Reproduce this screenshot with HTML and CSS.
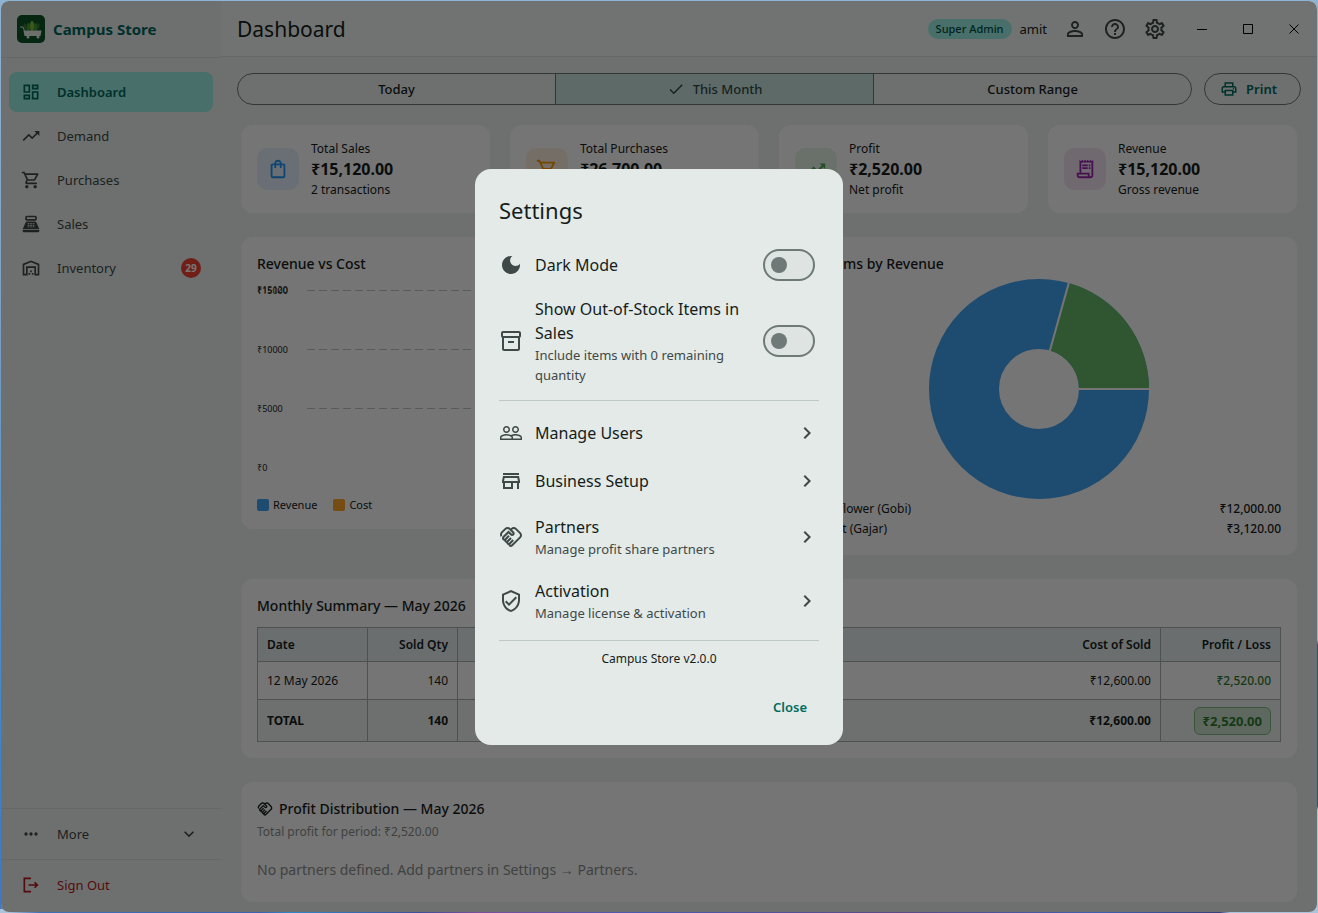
FILE: index.html
```html
<!DOCTYPE html>
<html lang="en">
<head>
<meta charset="utf-8">
<title>Campus Store</title>
<meta name="viewport" content="width=device-width, initial-scale=1">
<link rel="stylesheet" href="styles.css">
</head>
<body>
<svg class="sprite" aria-hidden="true">
  <symbol id="i-dashboard" viewBox="0 0 24 24"><path d="M19 5v2h-4V5h4M9 5v6H5V5h4m10 8v6h-4v-6h4M9 17v2H5v-2h4M21 3h-8v6h8V3zM11 3H3v10h8V3zm10 8h-8v10h8V11zm-10 4H3v6h8v-6z"/></symbol>
  <symbol id="i-trend" viewBox="0 0 24 24"><path d="M16 6l2.29 2.29-4.88 4.88-4-4L2 16.59 3.41 18l6-6 4 4 6.3-6.29L22 12V6z"/></symbol>
  <symbol id="i-cart" viewBox="0 0 24 24"><path d="M15.55 13c.75 0 1.41-.41 1.75-1.03l3.58-6.49c.37-.66-.11-1.48-.87-1.48H5.21l-.94-2H1v2h2l3.6 7.59-1.35 2.44C4.52 15.37 5.48 17 7 17h12v-2H7l1.1-2h7.45zM6.16 6h12.15l-2.76 5H8.53L6.16 6zM7 18c-1.1 0-1.99.9-1.99 2S5.9 22 7 22s2-.9 2-2-.9-2-2-2zm10 0c-1.1 0-1.99.9-1.99 2s.89 2 1.99 2 2-.9 2-2-.9-2-2-2z"/></symbol>
  <symbol id="i-pos" viewBox="0 0 24 24"><path fill-rule="evenodd" d="M17 2H7c-1.1 0-2 .9-2 2v2c0 1.100.9 2 2 2h10c1.100 0 2-.9 2-2V4c0-1.100-.9-2-2-2zM17 6H7V4h10v2zM20 22H4c-1.100 0-2-.9-2-2v-1h20v1c0 1.100-.9 2-2 2zM18.530 10.190C18.210 9.470 17.490 9 16.700 9H7.300c-.79 0-1.510.47-1.830 1.190L2 18h20zM8 11h2v1H8zM11 11h2v1h-2zM14 11h2v1h-2zM8 13h2v1H8zM11 13h2v1h-2zM14 13h2v1h-2zM8 15h2v1H8zM11 15h2v1h-2zM14 15h2v1h-2z"/></symbol>
  <symbol id="i-warehouse" viewBox="0 0 24 24"><path fill-rule="evenodd" d="M22 21V7L12 3 2 7v14h6v-9h8v9zM4 8.350V19h2v-9h12v9h2V8.350L12 5.150zM9 18h2v2H9zM11 15h2v2h-2zM13 18h2v2h-2z"/></symbol>
  <symbol id="i-more" viewBox="0 0 24 24"><circle cx="6" cy="12" r="2"/><circle cx="12" cy="12" r="2"/><circle cx="18" cy="12" r="2"/></symbol>
  <symbol id="i-down" viewBox="0 0 24 24"><path d="M16.590 8.590L12 13.170 7.410 8.590 6 10l6 6 6-6z"/></symbol>
  <symbol id="i-right" viewBox="0 0 24 24"><path d="M10 6L8.590 7.410 13.170 12l-4.580 4.590L10 18l6-6z"/></symbol>
  <symbol id="i-logout" viewBox="0 0 24 24"><path d="M17 8l-1.410 1.410L17.170 11H9v2h8.170l-1.580 1.580L17 16l4-4-4-4zM5 5h7V3H3v18h9v-2H5V5z"/></symbol>
  <symbol id="i-person" viewBox="0 0 24 24"><path d="M12 5.900c1.160 0 2.100.94 2.100 2.100s-.94 2.100-2.100 2.100S9.900 9.160 9.900 8s.94-2.100 2.100-2.100m0 9c2.970 0 6.100 1.460 6.100 2.100v1.100H5.900V17c0-.64 3.130-2.100 6.100-2.100M12 4C9.790 4 8 5.790 8 8s1.790 4 4 4 4-1.790 4-4-1.790-4-4-4zm0 9c-2.670 0-8 1.340-8 4v3h16v-3c0-2.660-5.330-4-8-4z"/></symbol>
  <symbol id="i-help" viewBox="0 0 24 24"><path d="M11 18h2v-2h-2v2zm1-16C6.480 2 2 6.480 2 12s4.480 10 10 10 10-4.480 10-10S17.520 2 12 2zm0 18c-4.410 0-8-3.590-8-8s3.590-8 8-8 8 3.590 8 8-3.590 8-8 8zm0-14c-2.210 0-4 1.790-4 4h2c0-1.100.9-2 2-2s2 .9 2 2c0 2-3 1.750-3 5h2c0-2.250 3-2.500 3-5 0-2.210-1.790-4-4-4z"/></symbol>
  <symbol id="i-gear" viewBox="0 0 24 24"><path d="M19.43 12.98c.04-.32.07-.64.07-.98 0-.34-.03-.66-.07-.98l2.110-1.650c.19-.15.24-.42.12-.64l-2-3.460c-.09-.16-.26-.25-.44-.25-.06 0-.12.01-.17.03l-2.490 1c-.52-.4-1.080-.73-1.690-.98l-.38-2.650C14.460 2.180 14.250 2 14 2h-4c-.25 0-.46.18-.49.42l-.38 2.650c-.61.25-1.170.59-1.690.98l-2.490-1c-.06-.02-.12-.03-.18-.03-.17 0-.34.09-.43.25l-2 3.460c-.13.22-.07.49.12.64l2.110 1.650c-.04.32-.07.65-.07.98 0 .33.03.66.07.98l-2.110 1.650c-.19.15-.24.42-.12.64l2 3.460c.09.16.26.25.44.25.06 0 .12-.01.17-.03l2.490-1c.52.4 1.080.73 1.690.98l.38 2.650c.03.24.24.42.49.42h4c.25 0 .46-.18.49-.42l.38-2.650c.61-.25 1.170-.59 1.690-.98l2.490 1c.06.02.12.03.18.03.17 0 .34-.09.43-.25l2-3.460c.12-.22.07-.49-.12-.64l-2.110-1.650zm-1.980-1.710c.04.31.05.52.05.73 0 .21-.02.43-.05.73l-.14 1.130.89.7 1.080.84-.7 1.210-1.270-.51-1.040-.42-.9.68c-.43.32-.84.56-1.250.73l-1.060.43-.16 1.130-.2 1.350h-1.400l-.19-1.350-.16-1.130-1.060-.43c-.43-.18-.83-.41-1.230-.71l-.91-.7-1.060.43-1.270.51-.7-1.210 1.080-.84.89-.7-.14-1.130c-.03-.31-.05-.54-.05-.74s.02-.43.05-.73l.14-1.130-.89-.7-1.080-.84.7-1.210 1.270.51 1.040.42.9-.68c.43-.32.84-.56 1.250-.73l1.060-.43.16-1.130.2-1.350h1.390l.19 1.350.16 1.130 1.060.43c.43.18.83.41 1.230.71l.91.7 1.060-.43 1.270-.51.7 1.210-1.070.85-.89.7.14 1.130zM12 8c-2.210 0-4 1.790-4 4s1.790 4 4 4 4-1.790 4-4-1.790-4-4-4zm0 6c-1.100 0-2-.9-2-2s.9-2 2-2 2 .9 2 2-.9 2-2 2z"/></symbol>
  <symbol id="i-print" viewBox="0 0 24 24"><path d="M19 8h-1V3H6v5H5c-1.660 0-3 1.340-3 3v6h4v4h12v-4h4v-6c0-1.660-1.340-3-3-3zM8 5h8v3H8V5zm8 12v2H8v-4h8v2zm2-2v-2H6v2H4v-4c0-.55.45-1 1-1h14c.55 0 1 .45 1 1v4h-2z"/><circle cx="18" cy="11.5" r="1"/></symbol>
  <symbol id="i-bag" viewBox="0 0 24 24"><path d="M18 6h-2c0-2.210-1.790-4-4-4S8 3.790 8 6H6c-1.100 0-2 .9-2 2v12c0 1.100.9 2 2 2h12c1.100 0 2-.9 2-2V8c0-1.100-.9-2-2-2zm-6-2c1.100 0 2 .9 2 2h-4c0-1.100.9-2 2-2zm6 16H6V8h2v2c0 .55.45 1 1 1s1-.45 1-1V8h4v2c0 .55.45 1 1 1s1-.45 1-1V8h2v12z"/></symbol>
  <symbol id="i-receipt" viewBox="0 0 24 24"><path d="M19.500 3.500L18 2l-1.500 1.500L15 2l-1.500 1.500L12 2l-1.500 1.500L9 2 7.500 3.500 6 2v14H3v3c0 1.660 1.340 3 3 3h12c1.660 0 3-1.340 3-3V2l-1.500 1.500zM15 20H6c-.55 0-1-.45-1-1v-1h10v2zm4-1c0 .55-.45 1-1 1s-1-.45-1-1v-3H8V5h11v14z"/><path d="M9 7h6v2H9zM16 7h2v2h-2zM9 10h6v2H9zM16 10h2v2h-2z"/></symbol>
  <symbol id="i-moon" viewBox="0 0 24 24"><path d="M12 3c-4.970 0-9 4.030-9 9s4.030 9 9 9 9-4.030 9-9c0-.46-.04-.92-.1-1.360-.98 1.370-2.580 2.260-4.400 2.260-2.980 0-5.400-2.420-5.400-5.400 0-1.810.89-3.420 2.260-4.400-.44-.06-.9-.1-1.360-.1z"/></symbol>
  <symbol id="i-box" viewBox="0 0 24 24"><path d="M20 2H4c-1 0-2 .9-2 2v3.010c0 .72.43 1.340 1 1.690V20c0 1.100 1.100 2 2 2h14c.9 0 2-.9 2-2V8.700c.57-.35 1-.97 1-1.690V4c0-1.100-1-2-2-2zm-1 18H5V9h14v11zm1-13H4V4h16v3z"/><path d="M9 12h6v2H9z"/></symbol>
  <symbol id="i-people" viewBox="0 0 24 24"><path d="M16.500 13c-1.200 0-3.070.34-4.500 1-1.430-.67-3.300-1-4.500-1C5.330 13 1 14.080 1 16.250V19h22v-2.750c0-2.170-4.330-3.250-6.500-3.250zm-4 4.500h-10v-1.250c0-.54 2.560-1.750 5-1.750s5 1.210 5 1.750v1.250zm9 0H14v-1.250c0-.46-.2-.86-.52-1.220.88-.3 1.960-.53 3.020-.53 2.440 0 5 1.210 5 1.750v1.250zM7.500 12c1.930 0 3.500-1.570 3.500-3.500S9.430 5 7.500 5 4 6.570 4 8.500 5.570 12 7.500 12zm0-5.500c1.100 0 2 .9 2 2s-.9 2-2 2-2-.9-2-2 .9-2 2-2zm9 5.500c1.930 0 3.500-1.570 3.500-3.500S18.430 5 16.500 5 13 6.570 13 8.500s1.570 3.500 3.500 3.500zm0-5.500c1.100 0 2 .9 2 2s-.9 2-2 2-2-.9-2-2 .9-2 2-2z"/></symbol>
  <symbol id="i-store" viewBox="0 0 24 24"><path d="M18.360 9l.6 3H5.040l.6-3h12.720M20 4H4v2h16V4zm0 3H4l-1 5v2h1v6h10v-6h4v6h2v-6h1v-2l-1-5zM6 18v-4h6v4H6z"/></symbol>
  <symbol id="i-handshake" viewBox="0 0 24 24"><path fill-rule="evenodd" d="M21.830 13.070c1.560-1.560 1.560-4.090 0-5.660l-4.240-4.240c-1.560-1.560-4.090-1.560-5.660 0l-.28.28-.28-.28c-1.560-1.560-4.090-1.560-5.660 0L2.170 6.710C.75 8.130.62 10.340 1.770 11.900l1.450-1.450c-.39-.75-.26-1.700.37-2.330l3.540-3.540c.78-.78 2.050-.78 2.830 0l3.560 3.560c.18.18.21.5 0 .71-.21.21-.53.18-.71 0L9.520 5.570l-5.800 5.790c-.98.97-.98 2.560 0 3.540.39.39.89.63 1.420.7.07.52.3 1.020.7 1.420.4.4.9.63 1.420.7.07.52.3 1.020.7 1.420.4.4.9.63 1.420.7.07.54.31 1.030.7 1.420.47.47 1.100.73 1.770.73.67 0 1.300-.26 1.770-.73l8.210-8.190zM12.220 19.850c-.18.18-.5.21-.71 0-.18-.18-.21-.5 0-.71l3.390-3.390-1.410-1.410-3.390 3.390c-.19.2-.51.19-.71 0-.21-.21-.18-.53 0-.71l3.390-3.390-1.410-1.410-3.390 3.390c-.18.18-.5.21-.71 0-.19-.19-.19-.51 0-.71l3.390-3.390-1.420-1.410-3.390 3.390c-.18.18-.5.21-.71 0-.19-.2-.19-.51 0-.71L9.520 8.400l1.870 1.860c.95.95 2.590.94 3.540 0 .98-.98.98-2.560 0-3.540l-1.860-1.860.28-.28c.78-.78 2.050-.78 2.830 0l4.240 4.240c.78.78.78 2.050 0 2.830l-8.200 8.200z"/></symbol>
  <symbol id="i-shield" viewBox="0 0 24 24"><path d="M12 1L3 5v6c0 5.550 3.840 10.740 9 12 5.160-1.260 9-6.450 9-12V5l-9-4zm7 10c0 4.520-2.980 8.690-7 9.930-4.020-1.240-7-5.410-7-9.930V6.300l7-3.110 7 3.110V11zm-11.590.59L6 13l4 4 8-8-1.410-1.420L10 14.170z"/></symbol>
  <symbol id="i-check" viewBox="0 0 24 24"><path d="M9 16.170L4.830 12l-1.420 1.410L9 19 21 7l-1.410-1.410z"/></symbol>
</svg>

<div class="window">
  <aside class="sidebar">
    <div class="brand">
      <svg class="logo" viewBox="0 0 28 28" aria-hidden="true">
        <rect width="28" height="28" rx="5" fill="#0c5424"/>
        <path d="M9 15C6 13 6 10 7 8c2 1 4 4 4 7zM20 15c3-2 3-5 2-7-2 1-4 4-4 7z" fill="#2f7d34"/>
        <ellipse cx="15" cy="11" rx="2" ry="5" fill="#7cc63a"/>
        <ellipse cx="11.500" cy="12" rx="1.500" ry="4" fill="#4c9a38"/><ellipse cx="18.500" cy="12" rx="1.500" ry="4" fill="#4c9a38"/>
        <path d="M3 12h3l1.500 4" fill="none" stroke="#e9efe6" stroke-width="1"/>
        <path d="M6.500 15.500h18l-1 5.500h-16z" fill="#eef2ea"/>
        <circle cx="11" cy="22" r="1.500" fill="#eef2ea"/><circle cx="21" cy="22" r="1.500" fill="#eef2ea"/>
      </svg>
      <span>Campus Store</span>
    </div>
    <nav class="nav">
      <a class="nav-item active" href="#"><svg class="ic20"><use href="#i-dashboard"/></svg><span>Dashboard</span></a>
      <a class="nav-item" href="#"><svg class="ic20"><use href="#i-trend"/></svg><span>Demand</span></a>
      <a class="nav-item" href="#"><svg class="ic20"><use href="#i-cart"/></svg><span>Purchases</span></a>
      <a class="nav-item" href="#"><svg class="ic20"><use href="#i-pos"/></svg><span>Sales</span></a>
      <a class="nav-item" href="#"><svg class="ic20"><use href="#i-warehouse"/></svg><span>Inventory</span><span class="count">29</span></a>
    </nav>
    <button class="side-btn" type="button"><svg class="ic20"><use href="#i-more"/></svg><span>More</span><svg class="ic20 end"><use href="#i-down"/></svg></button>
    <button class="side-btn danger" type="button"><svg class="ic20"><use href="#i-logout"/></svg><span>Sign Out</span></button>
  </aside>

  <div class="page">
    <header class="topbar">
      <h1>Dashboard</h1>
      <span class="role">Super Admin</span>
      <span class="user">amit</span>
      <div class="tools">
        <button type="button" aria-label="Account"><svg class="ic24"><use href="#i-person"/></svg></button>
        <button type="button" aria-label="Help"><svg class="ic24"><use href="#i-help"/></svg></button>
        <button type="button" aria-label="Settings"><svg class="ic24"><use href="#i-gear"/></svg></button>
      </div>
      <div class="winctl">
        <button type="button" aria-label="Minimize"><svg viewBox="0 0 10 10"><path d="M0 5.500h10"/></svg></button>
        <button type="button" aria-label="Maximize"><svg viewBox="0 0 10 10"><path d="M.5.5h9v9h-9z"/></svg></button>
        <button type="button" aria-label="Close window"><svg viewBox="0 0 10 10"><path d="M.5.5l9 9M9.500.5l-9 9"/></svg></button>
      </div>
    </header>

    <main class="content">
      <div class="filters">
        <div class="segments" role="group" aria-label="Period">
          <button type="button">Today</button>
          <button type="button" class="on"><svg class="ic18"><use href="#i-check"/></svg>This Month</button>
          <button type="button">Custom Range</button>
        </div>
        <button class="print" type="button"><svg class="ic18"><use href="#i-print"/></svg>Print</button>
      </div>

      <section class="stats">
        <article class="card stat"><span class="tile blue"><svg class="ic22"><use href="#i-bag"/></svg></span><div><p>Total Sales</p><strong>₹15,120.00</strong><p>2 transactions</p></div></article>
        <article class="card stat"><span class="tile orange"><svg class="ic22"><use href="#i-cart"/></svg></span><div><p>Total Purchases</p><strong>₹26,700.00</strong><p>3 purchases</p></div></article>
        <article class="card stat"><span class="tile green"><svg class="ic22"><use href="#i-trend"/></svg></span><div><p>Profit</p><strong>₹2,520.00</strong><p>Net profit</p></div></article>
        <article class="card stat"><span class="tile purple"><svg class="ic22"><use href="#i-receipt"/></svg></span><div><p>Revenue</p><strong>₹15,120.00</strong><p>Gross revenue</p></div></article>
      </section>

      <section class="charts">
        <article class="card">
          <h2>Revenue vs Cost</h2>
          <svg class="bars" role="img" aria-label="Revenue and cost by day">
            <g class="grid"><line x1="50" x2="100%" y1="15.500" y2="15.500"/><line x1="50" x2="100%" y1="74.500" y2="74.500"/><line x1="50" x2="100%" y1="133.500" y2="133.500"/></g>
            <rect x="57%" y="14" width="14" height="178" fill="#42a5f5"/><rect x="61%" y="43" width="14" height="149" fill="#ffa726"/>
            <text x="0" y="18">₹15120</text><text x="0" y="19">₹15000</text><text x="0" y="78">₹10000</text><text x="0" y="137">₹5000</text><text x="0" y="196">₹0</text>
          </svg>
          <div class="legend"><span><i class="sw rev"></i>Revenue</span><span><i class="sw cost"></i>Cost</span></div>
        </article>
        <article class="card">
          <h2>Top Items by Revenue</h2>
          <svg class="donut" viewBox="0 0 220 220" role="img" aria-label="Share of revenue by item">
            <circle cx="110" cy="110" r="75" fill="none" stroke="#42a5f5" stroke-width="70"/>
            <path d="M220 110A110 110 0 0 0 139.800 4.100L120.800 71.500A40 40 0 0 1 150 110z" fill="#66bb6a"/>
            <path d="M149 110h71M139.800 4.100L120.600 72.500" stroke="#fff" stroke-width="2"/>
          </svg>
          <ul class="items">
            <li><i class="dot rev"></i>Cauliflower (Gobi)<b>₹12,000.00</b></li>
            <li><i class="dot grn"></i>Carrot (Gajar)<b>₹3,120.00</b></li>
          </ul>
        </article>
      </section>

      <section class="card">
        <h2>Monthly Summary — May 2026</h2>
        <table class="summary">
          <colgroup><col class="c-date"><col class="c-qty"><col class="c-rev"><col><col class="c-pl"></colgroup>
          <thead><tr><th>Date</th><th>Sold Qty</th><th>Revenue</th><th>Cost of Sold</th><th>Profit / Loss</th></tr></thead>
          <tbody><tr><td>12 May 2026</td><td>140</td><td>₹15,120.00</td><td>₹12,600.00</td><td class="gain">₹2,520.00</td></tr></tbody>
          <tfoot><tr><td>TOTAL</td><td>140</td><td>₹15,120.00</td><td>₹12,600.00</td><td><span class="chip">₹2,520.00</span></td></tr></tfoot>
        </table>
      </section>

      <section class="card partners">
        <h2><svg class="ic16"><use href="#i-handshake"/></svg>Profit Distribution — May 2026</h2>
        <p class="sub">Total profit for period: ₹2,520.00</p>
        <p class="empty">No partners defined. Add partners in Settings → Partners.</p>
      </section>
    </main>
  </div>

  <div class="scrim">
    <div class="dialog" role="dialog" aria-modal="true" aria-labelledby="dlg-title">
      <h2 id="dlg-title">Settings</h2>
      <label class="row switch-row" for="dark"><svg class="ic24"><use href="#i-moon"/></svg><span class="txt">Dark Mode</span><input id="dark" class="switch" type="checkbox" role="switch"></label>
      <label class="row switch-row tall" for="oos"><svg class="ic24"><use href="#i-box"/></svg><span class="txt">Show Out-of-Stock Items in Sales<small>Include items with 0 remaining quantity</small></span><input id="oos" class="switch" type="checkbox" role="switch"></label>
      <hr>
      <button class="row" type="button"><svg class="ic24"><use href="#i-people"/></svg><span class="txt">Manage Users</span><svg class="ic24"><use href="#i-right"/></svg></button>
      <button class="row" type="button"><svg class="ic24"><use href="#i-store"/></svg><span class="txt">Business Setup</span><svg class="ic24"><use href="#i-right"/></svg></button>
      <button class="row two" type="button"><svg class="ic24"><use href="#i-handshake"/></svg><span class="txt">Partners<small>Manage profit share partners</small></span><svg class="ic24"><use href="#i-right"/></svg></button>
      <button class="row two" type="button"><svg class="ic24"><use href="#i-shield"/></svg><span class="txt">Activation<small>Manage license &amp; activation</small></span><svg class="ic24"><use href="#i-right"/></svg></button>
      <hr>
      <p class="version">Campus Store v2.0.0</p>
      <button class="close" type="button">Close</button>
    </div>
  </div>
</div>
</body>
</html>
```
FILE: styles.css
```css
:root {
  --ink: #161d1c;
  --ink-soft: #3f4947;
  --outline: #6f7977;
  --line: #dae2df;
  --primary: #006a60;
  --primary-soft: #9ef2e4;
  --surface: #f4fbf8;
  --surface-low: #eff5f2;
}
* { box-sizing: border-box; }
body {
  margin: 0;
  padding: 1px;
  height: 100vh;
  overflow: hidden;
  font: 13px/20px "Noto Sans", "Open Sans", sans-serif;
  color: var(--ink);
  background:
    linear-gradient(90deg, #a9c4dc 8px, #3f6fb5 40px, #3a62b0 260px, #2f86c8 290px, #3f4f9a 420px, #7a4f9e 480px, #4a5ab0 640px, #5c4a86 900px, #3f5fb0 1100px, #37407c 1220px, #a9c4dc 1230px) bottom / 100% 4px no-repeat,
    linear-gradient(180deg, #8fb3d4 640px, #34459a 645px, #34459a 806px, #a9c4dc 810px) right / 8px 100% no-repeat,
    linear-gradient(180deg, #8fb3d4 0, #7fa3c4 30%, #3f86cc 80%, #3f78c0 100%);
}
h1, h2, p, ul { margin: 0; padding: 0; font-weight: 400; }
button { font: inherit; color: inherit; background: none; border: 0; padding: 0; cursor: pointer; }
svg { fill: currentColor; flex: none; display: block; }
.sprite { display: none; }
.ic16 { width: 16px; height: 16px; }
.ic18 { width: 18px; height: 18px; }
.ic20 { width: 20px; height: 20px; }
.ic22 { width: 22px; height: 22px; }
.ic24 { width: 24px; height: 24px; }

.window {
  position: relative;
  display: flex;
  height: 100%;
  border-radius: 8px;
  overflow: hidden;
  background: var(--surface-low);
}

/* Sidebar */
.sidebar { width: 220px; flex: none; display: flex; flex-direction: column; }
.brand {
  display: flex;
  align-items: center;
  gap: 8px;
  height: 57px;
  padding-left: 16px;
  border-bottom: 1px solid var(--line);
  color: var(--primary);
  font-size: 15px;
  font-weight: 700;
}
.logo { width: 28px; height: 28px; }
.nav { flex: 1; display: flex; flex-direction: column; gap: 4px; padding: 14px 8px; }
.nav-item {
  display: flex;
  align-items: center;
  gap: 16px;
  height: 40px;
  padding: 0 12px;
  border-radius: 8px;
  color: var(--ink-soft);
  text-decoration: none;
}
.nav-item.active { background: var(--primary-soft); color: var(--primary); font-weight: 600; }
.count {
  margin-left: auto;
  width: 20px;
  height: 20px;
  border-radius: 10px;
  background: #f44336;
  color: #fff;
  font-size: 10px;
  font-weight: 700;
  text-align: center;
}
.side-btn {
  display: flex;
  align-items: center;
  gap: 16px;
  height: 51px;
  padding: 0 20px;
  border-top: 1px solid var(--line);
  color: var(--ink-soft);
}
.side-btn .end { margin-left: auto; margin-right: 2px; }
.side-btn.danger { height: 53px; padding-bottom: 3px; color: #ba1a1a; }

/* Top bar */
.page { flex: 1; min-width: 0; display: flex; flex-direction: column; }
.topbar {
  display: flex;
  align-items: center;
  height: 56px;
  flex: none;
  padding-left: 16px;
  background: var(--surface);
  border-bottom: 1px solid var(--line);
}
.topbar h1 { flex: 1; font-size: 21px; line-height: 28px; }
.role {
  padding: 0 8px;
  border-radius: 10px;
  background: var(--primary-soft);
  color: #005048;
  font-size: 11px;
  font-weight: 500;
}
.user { margin: 0 8px; color: var(--ink); }
.tools, .winctl { display: flex; }
.tools button { width: 40px; height: 40px; display: grid; place-items: center; color: var(--ink-soft); }
.tools { margin-right: 4px; }
.winctl button { width: 46px; height: 32px; display: grid; place-items: center; color: #000; }
.winctl svg { width: 10px; height: 10px; fill: none; stroke: currentColor; }

/* Content */
.content { display: flex; flex-direction: column; gap: 24px; padding: 16px; min-height: 0; }
.filters { display: flex; gap: 12px; margin-bottom: -4px; font-weight: 500; }
.segments { flex: 1; display: flex; height: 32px; border: 1px solid var(--outline); border-radius: 16px; overflow: hidden; }
.segments button { flex: 1; display: flex; align-items: center; justify-content: center; gap: 8px; }
.segments button + button { border-left: 1px solid var(--outline); }
.segments .on { background: #cce8e3; color: #324b48; }
.print {
  display: flex;
  align-items: center;
  gap: 8px;
  height: 32px;
  padding: 0 23px 0 15px;
  border: 1px solid var(--outline);
  border-radius: 16px;
  color: var(--primary);
  font-weight: 600;
}
.card { background: #fff; border-radius: 12px; padding: 16px; margin: 0 4px; }
.card h2 { font-size: 14px; line-height: 22px; font-weight: 500; }
.stats { display: grid; grid-template-columns: repeat(4, 1fr); gap: 20px; margin: 0 4px; }
.charts { display: grid; grid-template-columns: 1fr 1fr; align-items: start; gap: 24px; margin: 0 4px; }
.stats .card, .charts .card { margin: 0; }
.stat { display: flex; align-items: center; gap: 12px; padding: 14px 16px; font-size: 12px; }
.stat strong { display: block; font-size: 16px; line-height: 22px; }
.stat p { line-height: 19px; }
.tile { width: 42px; height: 42px; border-radius: 10px; display: grid; place-items: center; }
.blue { background: #e5f2fd; color: #2196f3; }
.orange { background: #fdf0de; color: #ff9800; }
.green { background: #e6f3e7; color: #4caf50; }
.purple { background: #f3e5f5; color: #9c27b0; }
.bars { width: 100%; height: 222px; }
.bars text { font-size: 9px; fill: var(--ink); }
.grid line { stroke: #bec9c6; stroke-dasharray: 8 4; }
.legend { display: flex; gap: 16px; font-size: 11px; line-height: 16px; }
.legend span { display: flex; align-items: center; gap: 4px; }
.sw { width: 12px; height: 12px; border-radius: 2px; }
.rev { background: #42a5f5; }
.cost { background: #ffa726; }
.grn { background: #66bb6a; }
.donut { width: 220px; height: 220px; margin: 4px auto 0; }
.items { list-style: none; font-size: 12px; }
.items li { display: flex; align-items: center; }
.items b { margin-left: auto; font-weight: 500; }
.dot { width: 8px; height: 8px; border-radius: 4px; margin-right: 6px; }

.summary { width: 100%; margin-top: 10px; table-layout: fixed; border-collapse: collapse; font-size: 12px; border: 1px solid var(--outline); }
.c-date { width: 110px; }
.c-qty { width: 90px; }
.c-rev { width: 120px; }
.c-pl { width: 120px; }
.summary th, .summary td { padding: 0 9px; text-align: right; border: 1px solid #a9b2b0; }
.summary th:first-child, .summary td:first-child { text-align: left; }
.summary th { height: 34px; font-weight: 600; }
.summary thead { background: #e7f0f2; }
.summary tbody td { height: 38px; }
.summary tfoot { background: var(--surface-low); font-weight: 700; }
.summary tfoot td { height: 42px; }
.summary .gain { color: #2e7d32; font-weight: 500; }
.chip {
  display: inline-block;
  padding: 2px 8px;
  border: 1px solid #7db980;
  border-radius: 6px;
  background: #cde3cd;
  color: #2e7d32;
  font-size: 13px;
  line-height: 22px;
}
.partners h2 { display: flex; align-items: center; gap: 6px; }
.sub { margin-top: 2px; font-size: 12px; color: #8a8f8d; }
.empty { margin: 18px 0 6px; font-size: 14px; color: #8a8f8d; }

/* Settings dialog */
.scrim { position: absolute; inset: 0; display: grid; place-items: center; background: rgba(0, 0, 0, .54); }
.dialog {
  width: 368px;
  padding: 24px 24px 18px;
  border-radius: 16px;
  background: #e3eae7;
  display: flex;
  flex-direction: column;
}
.dialog h2 { font-size: 22px; line-height: 34px; margin-bottom: 14px; }
.row { display: flex; align-items: center; gap: 12px; min-height: 48px; text-align: left; color: var(--ink-soft); }
.row.two { min-height: 64px; }
.row.tall { min-height: 104px; }
.txt { flex: 1; font-size: 16px; line-height: 24px; color: var(--ink); }
.txt small { display: block; font-size: 13px; line-height: 20px; color: var(--ink-soft); }
.switch-row { padding-right: 4px; }
.switch {
  appearance: none;
  width: 52px;
  height: 32px;
  margin: 0;
  padding: 6px;
  border: 2px solid var(--outline);
  border-radius: 16px;
  background: #dde4e2;
}
.switch::before { content: ""; display: block; width: 16px; height: 16px; border-radius: 8px; background: var(--outline); }
.dialog hr { width: 100%; height: 1px; margin: 7px 0 8px; border: 0; background: #bec9c6; }
.version { font-size: 12px; text-align: center; }
.close { align-self: flex-end; height: 40px; margin-top: 18px; padding: 0 12px; color: var(--primary); font-weight: 600; }
```
